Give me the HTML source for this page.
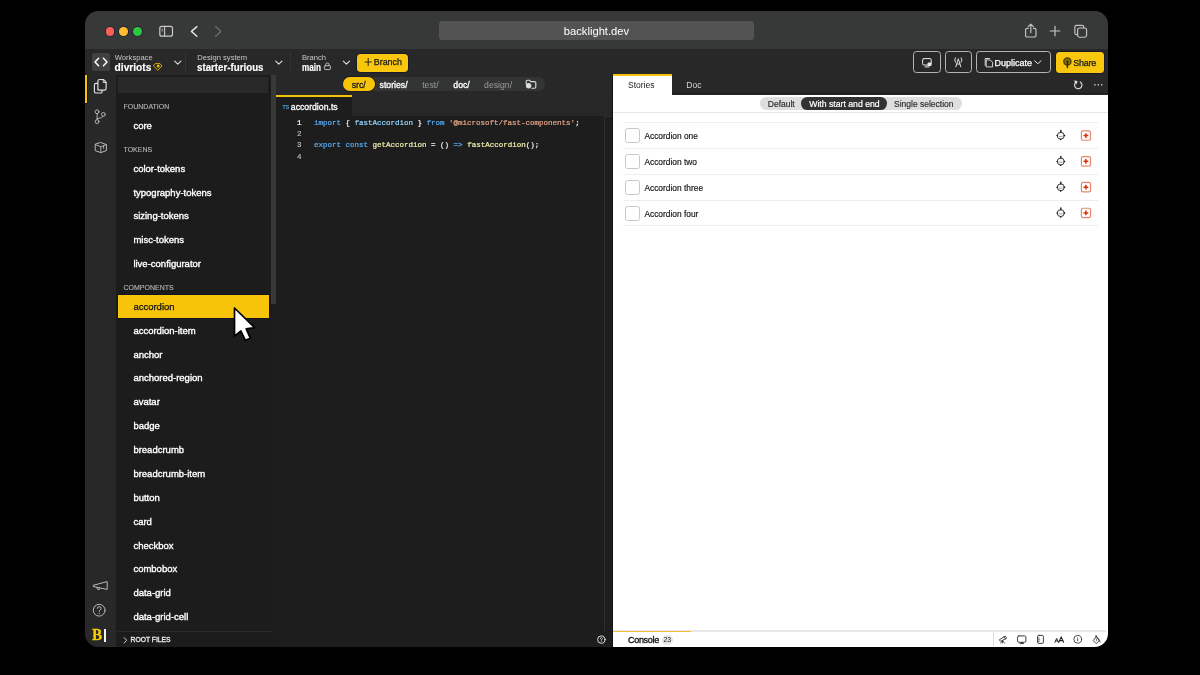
<!DOCTYPE html>
<html><head><meta charset="utf-8">
<style>
*{box-sizing:border-box;margin:0;padding:0}
html,body{width:1200px;height:675px;background:#000;overflow:hidden;font-family:"Liberation Sans",sans-serif;}
#win{position:absolute;left:85px;top:11px;width:1023px;height:636px;border-radius:13.5px;overflow:hidden;background:#1e1e1e;}
#c{position:absolute;left:-85px;top:-11px;width:1200px;height:675px;will-change:transform}
#c>div,#c>svg{position:absolute}
.t{white-space:nowrap;line-height:1}
.item{left:133.4px;font-size:9.5px;color:#fff;line-height:12px;height:12px;white-space:nowrap;-webkit-text-stroke:0.35px #fff}
.hdr{left:123.5px;font-size:7px;color:#b6b6b6;-webkit-text-stroke:0.12px #b6b6b6;line-height:10px;height:10px;white-space:nowrap}
.code{left:314px;font-family:"Liberation Mono",monospace;font-size:7.5px;line-height:11.3px;height:11.3px;white-space:pre;color:#f2f2f2}
.code,.code span{-webkit-text-stroke:0.22px currentColor}
.ln{left:276px;width:25.5px;text-align:right;font-family:"Liberation Mono",monospace;font-size:7.5px;line-height:11.3px;height:11.3px;color:#858585;-webkit-text-stroke:0.2px currentColor}
.k{color:#58aaf0}.v{color:#90d4ff}.s{color:#e0a082}.f{color:#ebebac}
.row{left:623.1px;width:475.2px;height:25.8px;border-top:1px solid #eeeeee}
.row i{position:absolute;left:2.2px;top:5px;width:15px;height:15px;border:1px solid #c8c8c8;border-radius:2.5px;background:#fff}
.row b{position:absolute;left:21.3px;top:8px;font-weight:normal;font-size:8.4px;line-height:11px;color:#111;-webkit-text-stroke:0.15px #111;white-space:nowrap}
.tbtn{top:51px;height:22.2px;border:1.2px solid #b4b4b4;border-radius:3.5px}
.lbl{font-size:7.6px;color:#c8c8c8;line-height:10px;white-space:nowrap}
.val{font-size:10.2px;-webkit-text-stroke:0.15px #fff;color:#fff;line-height:12px;white-space:nowrap;transform-origin:0 50%}
</style></head><body>
<div id="win"><div id="c">
 <!-- backgrounds -->
 <div style="left:85px;top:11px;width:1023px;height:37.8px;background:#373938"></div>
 <div style="left:85px;top:48.8px;width:1023px;height:26.2px;background:#282828"></div>
 <div style="left:276px;top:75px;width:337px;height:21px;background:#282828"></div>
 <div style="left:85px;top:75px;width:31px;height:572px;background:#282828"></div>
 <div style="left:116px;top:75px;width:160px;height:572px;background:#1c1c1c"></div>
 <div style="left:276px;top:95.5px;width:337px;height:20.5px;background:#272727"></div>
 <div style="left:276px;top:116px;width:337px;height:531px;background:#1d1d1d"></div>
 <div style="left:613px;top:74px;width:495px;height:573px;background:#fff"></div>
 <div style="left:613px;top:74px;width:495px;height:20.5px;background:#282828"></div><div style="left:671.7px;top:93.3px;width:437px;height:1.2px;background:#1c1c1c"></div>
 
 <div style="left:612px;top:74px;width:1px;height:573px;background:#121212"></div>
 <!-- TITLE BAR -->
 <div style="left:105.6px;top:27.2px;width:8.6px;height:8.6px;border-radius:50%;background:#fe5f57;box-shadow:0 0 0 0.8px #1c2236"></div>
 <div style="left:119.1px;top:27.2px;width:8.6px;height:8.6px;border-radius:50%;background:#febc2e;box-shadow:0 0 0 0.8px #1c2236"></div>
 <div style="left:133px;top:27.2px;width:8.6px;height:8.6px;border-radius:50%;background:#28c840;box-shadow:0 0 0 0.8px #2c1632"></div>
 <div style="left:439.4px;top:20.8px;width:314.2px;height:19px;border-radius:3.5px;background:#535353"></div>
 <div class="t" style="left:439.4px;top:24.5px;width:314.2px;text-align:center;font-size:11.2px;color:#fff;line-height:12px">backlight.dev</div>
 <svg style="left:0;top:0" width="1200" height="675" viewBox="0 0 1200 675" fill="none" stroke-linecap="round" stroke-linejoin="round">
  <!-- sidebar icon -->
  <rect x="159.8" y="26.4" width="12.7" height="9.8" rx="2" stroke="#c9c9c9" stroke-width="1.2"/>
  <path d="M164.6 26.4V36.2" stroke="#c9c9c9" stroke-width="1.1"/>
  <path d="M162.2 28.8V31.2" stroke="#c9c9c9" stroke-width="0.8"/>
  <!-- back / fwd -->
  <path d="M196.9 26.6L191.4 31.4L196.9 36.2" stroke="#e4e4e4" stroke-width="1.4"/>
  <path d="M215.6 26.6L220.9 31.4L215.6 36.2" stroke="#6e6e6e" stroke-width="1.3"/>
  <!-- share -->
  <path d="M1028.2 28.4H1027.2Q1025.6 28.4 1025.6 30V35.4Q1025.6 37 1027.2 37H1034.4Q1036 37 1036 35.4V30Q1036 28.4 1034.4 28.4H1033.4" stroke="#c4c4c4" stroke-width="1.15"/>
  <path d="M1030.8 32.6V24.4M1028.2 26.6L1030.8 24.1L1033.4 26.6" stroke="#c4c4c4" stroke-width="1.15"/>
  <!-- plus -->
  <path d="M1050.2 31H1059.8M1055 26.4V35.8" stroke="#c4c4c4" stroke-width="1.2"/>
  <!-- tabs -->
  <path d="M1077 34.6H1076.6Q1074.8 34.6 1074.8 32.8V27.2Q1074.8 25.4 1076.6 25.4H1082Q1083.8 25.4 1083.8 27.2V27.6" stroke="#c4c4c4" stroke-width="1.15"/>
  <rect x="1077.6" y="28" width="9" height="9.2" rx="1.9" stroke="#c4c4c4" stroke-width="1.15"/>
 </svg>
 <!-- TOOLBAR -->
 <div style="left:92px;top:53px;width:18px;height:18px;border-radius:2px;background:#3f4040"></div>
 <svg style="left:92px;top:53px" width="18" height="18" viewBox="0 0 18 18" fill="none" stroke="#fff" stroke-width="1.5" stroke-linecap="round" stroke-linejoin="round"><path d="M6.6 5.2L3 9L6.6 12.8M11.4 5.2L15 9L11.4 12.8"/></svg>
 <div class="lbl" style="left:114.8px;top:52.9px">Workspace</div>
 <div class="val" style="left:114.6px;top:61.5px;font-weight:bold">divriots</div>
 <div class="lbl" style="left:197.3px;top:52.9px">Design system</div>
 <div class="val" style="left:197.2px;top:61.5px;font-weight:bold;transform:scaleX(0.955)">starter-furious</div>
 <div class="lbl" style="left:302px;top:52.9px">Branch</div>
 <div class="val" style="left:301.8px;top:61.5px;font-weight:bold;transform:scaleX(0.8)">main</div>
 <div style="left:185.3px;top:52px;width:1px;height:19.5px;background:#343434"></div>
 <div style="left:290.3px;top:52px;width:1px;height:19.5px;background:#343434"></div>
 <svg style="left:0;top:0" width="1200" height="675" viewBox="0 0 1200 675" fill="none" stroke-linecap="round" stroke-linejoin="round">
  <path d="M174.7 61.2L177.8 64.1L180.9 61.2" stroke="#dedede" stroke-width="1.15"/>
  <path d="M275.7 61.2L278.8 64.1L281.9 61.2" stroke="#dedede" stroke-width="1.15"/>
  <path d="M343.3 61.2L346.4 64.1L349.5 61.2" stroke="#dedede" stroke-width="1.15"/>
  <!-- diamond -->
  <path d="M155.6 63.6H160L162 66L157.8 70.2L153.6 66Z" stroke="#e9b800" stroke-width="0.9"/>
  <circle cx="158.2" cy="66" r="1.5" fill="#e9b800"/>
  <!-- lock -->
  <rect x="324.4" y="65.7" width="6" height="3.9" rx="0.9" stroke="#d0d0d0" stroke-width="0.9"/>
  <path d="M325.7 65.6V64.6Q325.7 63 327.4 63Q329.1 63 329.1 64.6V65.6" stroke="#d0d0d0" stroke-width="0.9"/>
 </svg>
 <div style="left:357.4px;top:54px;width:51px;height:17.5px;border-radius:3.8px;background:#f8c70e;box-shadow:0 0 0 0.7px #14162b"></div>
 <div class="t" style="left:373.8px;top:58.3px;font-size:8.9px;color:#1a1a1a;-webkit-text-stroke:0.25px #1a1a1a">Branch</div>
 <svg style="left:362px;top:56px" width="12" height="12" viewBox="0 0 12 12" fill="none" stroke="#1a1a1a" stroke-width="0.9"><path d="M2.6 6H9.8M6.2 2V10"/></svg>
 <!-- right toolbar buttons -->
 <div class="tbtn" style="left:913.3px;width:27.5px"></div>
 <div class="tbtn" style="left:944.7px;width:27.3px"></div>
 <div class="tbtn" style="left:976.2px;width:74.6px"></div>
 <div style="left:1055.8px;top:52.3px;width:48.4px;height:20.4px;border-radius:3.5px;background:#f8c70e;box-shadow:0 0 0 0.7px #14162b"></div>
 <div class="t" style="left:994.5px;top:59px;font-size:9px;color:#fff;-webkit-text-stroke:0.25px #fff">Duplicate</div>
 <div class="t" style="left:1073.3px;top:59px;font-size:9px;letter-spacing:-0.25px;color:#1a1a1a;-webkit-text-stroke:0.25px #1a1a1a">Share</div>
 <svg style="left:0;top:0" width="1200" height="675" viewBox="0 0 1200 675" fill="none" stroke-linecap="round" stroke-linejoin="round">
  <!-- monitor btn icon -->
  <rect x="922.6" y="58.6" width="8.6" height="6.4" rx="1.2" stroke="#e8e8e8" stroke-width="1"/>
  <path d="M925 66.9H929.2" stroke="#e8e8e8" stroke-width="1"/>
  <rect x="927.6" y="62.6" width="3.8" height="3.4" rx="0.6" fill="#e8e8e8"/>
  <!-- antenna btn icon -->
  <path d="M955.8 66.8L958.3 58.8L960.8 66.8M956.7 64H959.9" stroke="#e8e8e8" stroke-width="0.95"/>
  <path d="M955.4 57.8Q953.8 60 955.4 62.2M961.2 57.8Q962.8 60 961.2 62.2" stroke="#e8e8e8" stroke-width="0.95"/>
  <!-- duplicate icon -->
  <path d="M986.6 59.9H990.2L992.6 62.3V66.9H986.6Z" stroke="#e8e8e8" stroke-width="0.9"/>
  <path d="M985.2 65.3V58.5H989.4" stroke="#e8e8e8" stroke-width="0.9"/>
  <path d="M1034.6 60.8L1037.8 63.8L1041 60.8" stroke="#e8e8e8" stroke-width="1"/>
  <!-- share podcast icon -->
  <circle cx="1067.4" cy="61.4" r="3.5" fill="#9a7d00" stroke="#4f4000" stroke-width="1.5"/>
  <circle cx="1067.4" cy="61.4" r="1.2" fill="#3a2e00"/>
  <path d="M1067.4 62.4V67.4" stroke="#3a2e00" stroke-width="1.5"/>
 </svg>

 <!-- SIDEBAR -->
 <div style="left:85px;top:75px;width:3px;height:28.6px;background:#12143a"></div><div style="left:85px;top:75px;width:2px;height:27.7px;background:#f2c40a"></div>
 <div style="left:118.2px;top:77.3px;width:150px;height:15.5px;background:#292929"></div>
 <div style="left:271px;top:75px;width:5px;height:229px;background:#383838"></div>
 <div style="left:117.8px;top:294.7px;width:150.8px;height:23.7px;background:#f8c40a;box-shadow:0 0 0 0.6px #0d0f25"></div>
 <div class="hdr" style="top:101.8px">FOUNDATION</div>
 <div class="hdr" style="top:144.5px">TOKENS</div>
 <div class="hdr" style="top:282.6px">COMPONENTS</div>
 <div class="item" style="top:120.2px">core</div>
 <div class="item" style="top:162.7px">color-tokens</div>
 <div class="item" style="top:186.5px">typography-tokens</div>
 <div class="item" style="top:210.4px">sizing-tokens</div>
 <div class="item" style="top:234.2px">misc-tokens</div>
 <div class="item" style="top:258.2px">live-configurator</div>
 <div class="item" style="top:301.4px;color:#111;-webkit-text-stroke:0.25px #111">accordion</div>
 <div class="item" style="top:324.6px">accordion-item</div>
 <div class="item" style="top:348.5px">anchor</div>
 <div class="item" style="top:372.4px">anchored-region</div>
 <div class="item" style="top:396.2px">avatar</div>
 <div class="item" style="top:420.2px">badge</div>
 <div class="item" style="top:444.0px">breadcrumb</div>
 <div class="item" style="top:467.9px">breadcrumb-item</div>
 <div class="item" style="top:491.7px">button</div>
 <div class="item" style="top:515.6px">card</div>
 <div class="item" style="top:539.5px">checkbox</div>
 <div class="item" style="top:563.4px">combobox</div>
 <div class="item" style="top:587.2px">data-grid</div>
 <div class="item" style="top:611.2px">data-grid-cell</div>
 <div style="left:118px;top:631px;width:154px;height:1px;background:#2c2c2c"></div>
 <div class="t" style="left:130.6px;top:637.2px;font-size:6.75px;color:#ededed;-webkit-text-stroke:0.3px #ededed">ROOT FILES</div>
 <!-- EDITOR -->
 <div style="left:276px;top:95.5px;width:75.6px;height:21.2px;background:#1d1d1d"></div>
 <div style="left:276px;top:95.3px;width:75.6px;height:1.8px;background:#f5c20b"></div>
 <div class="t" style="left:282.6px;top:104.5px;font-size:5.2px;font-weight:bold;color:#4aa0dc;letter-spacing:-0.1px">TS</div>
 <div class="t" style="left:290.8px;top:102.9px;font-size:8.7px;color:#fff;-webkit-text-stroke:0.3px #fff">accordion.ts</div>
 <div style="left:604px;top:116.3px;width:1px;height:514.5px;background:#2f2f2f"></div><div style="left:604px;top:116.3px;width:8px;height:1px;background:#2c2c2c"></div>
 <div class="ln" style="top:117.75px;color:#ffffff">1</div>
 <div class="code" style="top:117.75px"><span class="k">import</span> { <span class="v">fastAccordion</span> } <span class="k">from</span> <span class="s">'@microsoft/fast-components'</span>;</div>
 <div class="ln" style="top:129.00px;color:#b8b8b8">2</div>
 <div class="ln" style="top:140.25px;color:#b8b8b8">3</div>
 <div class="code" style="top:140.25px"><span class="k">export</span> <span class="k">const</span> <span class="f">getAccordion</span> = () <span class="k">=&gt;</span> <span class="f">fastAccordion</span>();</div>
 <div class="ln" style="top:151.50px;color:#b8b8b8">4</div>
 <!-- PREVIEW -->
 <div style="left:613px;top:74px;width:58.7px;height:21px;background:#fff"></div>
 <div style="left:613px;top:73.8px;width:58.7px;height:1.9px;background:#f5c20b"></div>
 <div class="t" style="left:628px;top:81.3px;font-size:8.5px;color:#1a1a1a">Stories</div>
 <div class="t" style="left:686.3px;top:81.3px;font-size:8.5px;color:#d6d6d6">Doc</div>
 <div style="left:759.5px;top:97.1px;width:202.3px;height:12.7px;border-radius:6.4px;background:#dedede"></div>
 <div style="left:801px;top:97.1px;width:86.2px;height:12.7px;border-radius:6.4px;background:#333"></div>
 <div class="t" style="left:767.8px;top:100px;font-size:8.5px;color:#2a2a2a;-webkit-text-stroke:0.15px #2a2a2a">Default</div>
 <div class="t" style="left:809.2px;top:100px;font-size:8.7px;color:#fff;-webkit-text-stroke:0.2px #fff">With start and end</div>
 <div class="t" style="left:894px;top:100px;font-size:8.5px;color:#2a2a2a;-webkit-text-stroke:0.15px #2a2a2a">Single selection</div>
 <div style="left:613px;top:111.6px;width:495px;height:1px;background:#e8e8e8"></div>
 <div class="row" style="top:122.1px"><i></i><b>Accordion one</b></div>
 <div class="row" style="top:147.9px"><i></i><b>Accordion two</b></div>
 <div class="row" style="top:173.7px"><i></i><b>Accordion three</b></div>
 <div class="row" style="top:199.5px"><i></i><b>Accordion four</b></div>
 <div class="row" style="top:225.3px;height:1px"></div>
 <div style="left:613px;top:630.4px;width:493px;height:1.4px;background:#e7e7e7"></div>
 <div style="left:613px;top:630.6px;width:77.5px;height:1.5px;background:#eec23a"></div>
 <div class="t" style="left:628px;top:636px;font-size:9px;color:#111;-webkit-text-stroke:0.35px #111;letter-spacing:-0.3px">Console</div>
 <div style="left:661.5px;top:634.5px;width:11.7px;height:10px;border-radius:5px;background:#e6e6e6"></div>
 <div class="t" style="left:661.5px;top:636.5px;width:11.7px;text-align:center;font-size:6.8px;color:#222">23</div>
 <div style="left:993px;top:631.5px;width:1px;height:14px;background:#e0e0e0"></div>
 <!-- FOLDER PILLS -->
 <div style="left:342.4px;top:77.2px;width:202.4px;height:14px;border-radius:7px;background:#333534"></div>
 <div style="left:343px;top:77.4px;width:31.5px;height:13.6px;border-radius:6.8px;background:#f8c40a;box-shadow:0 0 0 0.6px #0d0f25"></div>
 <div class="t" style="left:351.7px;top:80.9px;font-size:8.7px;color:#1a1a1a;-webkit-text-stroke:0.3px #1a1a1a;">src/</div>
 <div class="t" style="left:379.6px;top:80.9px;font-size:8.7px;color:#fff;-webkit-text-stroke:0.3px #fff;">stories/</div>
 <div class="t" style="left:422.2px;top:80.9px;font-size:8.7px;color:#9a9a9a;">test/</div>
 <div class="t" style="left:453.3px;top:80.9px;font-size:8.7px;color:#fff;-webkit-text-stroke:0.3px #fff;">doc/</div>
 <div class="t" style="left:484.1px;top:80.9px;font-size:8.7px;color:#9a9a9a;">design/</div>
 <svg style="left:0;top:0" width="1200" height="675" viewBox="0 0 1200 675" fill="none" stroke-linecap="round" stroke-linejoin="round">
<path d="M526.2 84V81.4Q526.2 80.2 527.4 80.2H529.4L530.8 81.6H534.6Q535.8 81.6 535.8 82.8V87Q535.8 88.2 534.6 88.2H531.8" stroke="#dadada" stroke-width="1.15"/>
<circle cx="528.6" cy="85.8" r="2.7" fill="#dedede"/>
<path d="M97.9 90.1V81.2Q97.9 79.5 99.6 79.5H103.4L106.1 82.2V88.4Q106.1 90.1 104.4 90.1H99.6Q97.9 90.1 97.9 88.4" stroke="#e2e2e2" stroke-width="1.15"/>
<path d="M103.2 79.7V82.5H106" stroke="#e2e2e2" stroke-width="0.9"/>
<path d="M97.6 83.4H96Q94.4 83.4 94.4 85V91.4Q94.4 93 96 93H100.5Q102.1 93 102.1 91.4V90.4" stroke="#e2e2e2" stroke-width="1.15"/>
<circle cx="97.1" cy="111.8" r="1.9" stroke="#b9b9b9" stroke-width="0.95"/><circle cx="97.1" cy="121.6" r="1.9" stroke="#b9b9b9" stroke-width="0.95"/><circle cx="103.4" cy="114.4" r="1.9" stroke="#b9b9b9" stroke-width="0.95"/>
<path d="M97.1 113.8V119.6M103.2 116.4Q102.6 118.2 97.3 118.6" stroke="#b9b9b9" stroke-width="0.95"/>
<path d="M100.8 142.6L106.4 144.6V150.6L100.8 152.6L95.2 150.6V144.6Z" stroke="#b9b9b9" stroke-width="1"/>
<path d="M95.4 144.7L100.8 146.7L106.2 144.7M100.8 146.7V152.4M103.6 145.8V148.4" stroke="#b9b9b9" stroke-width="0.9"/>
<path d="M93.6 585.2L107.2 581.6V589.4L93.6 586.6Z" stroke="#b9b9b9" stroke-width="1"/>
<path d="M96.8 587.4L97.6 589.4H99.6L99.2 588" stroke="#b9b9b9" stroke-width="0.9"/>
<circle cx="99.2" cy="610.2" r="5.9" stroke="#b9b9b9" stroke-width="1"/>
<path d="M97.3 608.4Q97.4 606.7 99.2 606.7Q101.1 606.7 101.1 608.3Q101.1 609.3 100 609.9Q99.2 610.4 99.2 611.4" stroke="#b9b9b9" stroke-width="1"/><circle cx="99.2" cy="613.3" r="0.65" fill="#b9b9b9"/>
<circle cx="601.3" cy="639.6" r="3.7" stroke="#f0f0f0" stroke-width="0.9"/>
<path d="M600.3 638.7Q600.3 637.7 601.3 637.7Q602.4 637.7 602.4 638.6Q602.4 639.2 601.3 639.8V640.3" stroke="#f0f0f0" stroke-width="0.7"/><circle cx="601.3" cy="641.5" r="0.45" fill="#f0f0f0"/>
<path d="M1080.2 81.9A3.7 3.7 0 1 1 1076.2 82" stroke="#dcdcdc" stroke-width="1.15"/>
<path d="M1074.6 80.8L1077.2 81.2L1076.6 83.8Z" fill="#f2f2f2" stroke="#f2f2f2" stroke-width="0.4"/>
<rect x="1094.25" y="84.1" width="1.3" height="1.4" fill="#dcdcdc"/>
<rect x="1097.6499999999999" y="84.1" width="1.3" height="1.4" fill="#dcdcdc"/>
<rect x="1101.05" y="84.1" width="1.3" height="1.4" fill="#dcdcdc"/>
<circle cx="1060.8" cy="135.7" r="3.5" stroke="#2a2a2a" stroke-width="0.9" fill="#f4f4f4"/>
<path d="M1060.8 130.6V132.3" stroke="#2a2a2a" stroke-width="1.5"/>
<circle cx="1057.1" cy="135.6" r="0.75" fill="#111"/><circle cx="1064.5" cy="135.6" r="0.75" fill="#111"/><circle cx="1060.6" cy="139.5" r="0.75" fill="#111"/>
<path d="M1059.3 136.5H1062.3" stroke="#999" stroke-width="0.8"/>
<circle cx="1060.8" cy="161.5" r="3.5" stroke="#2a2a2a" stroke-width="0.9" fill="#f4f4f4"/>
<path d="M1060.8 156.4V158.1" stroke="#2a2a2a" stroke-width="1.5"/>
<circle cx="1057.1" cy="161.4" r="0.75" fill="#111"/><circle cx="1064.5" cy="161.4" r="0.75" fill="#111"/><circle cx="1060.6" cy="165.3" r="0.75" fill="#111"/>
<path d="M1059.3 162.3H1062.3" stroke="#999" stroke-width="0.8"/>
<circle cx="1060.8" cy="187.3" r="3.5" stroke="#2a2a2a" stroke-width="0.9" fill="#f4f4f4"/>
<path d="M1060.8 182.2V183.9" stroke="#2a2a2a" stroke-width="1.5"/>
<circle cx="1057.1" cy="187.2" r="0.75" fill="#111"/><circle cx="1064.5" cy="187.2" r="0.75" fill="#111"/><circle cx="1060.6" cy="191.1" r="0.75" fill="#111"/>
<path d="M1059.3 188.1H1062.3" stroke="#999" stroke-width="0.8"/>
<circle cx="1060.8" cy="213.1" r="3.5" stroke="#2a2a2a" stroke-width="0.9" fill="#f4f4f4"/>
<path d="M1060.8 208.0V209.7" stroke="#2a2a2a" stroke-width="1.5"/>
<circle cx="1057.1" cy="213.0" r="0.75" fill="#111"/><circle cx="1064.5" cy="213.0" r="0.75" fill="#111"/><circle cx="1060.6" cy="216.9" r="0.75" fill="#111"/>
<path d="M1059.3 213.9H1062.3" stroke="#999" stroke-width="0.8"/>
<path d="M999.6 639.6L1005.2 636.1L1006.7 638.2L1001 641.2Z" stroke="#333" stroke-width="0.9"/>
<path d="M1003.9 636.9L1005.3 639" stroke="#333" stroke-width="0.8"/>
<path d="M1002.6 640.6L1000.8 643.2M1002.6 640.6L1004.6 643.2M1002.6 640.6V643" stroke="#333" stroke-width="0.8"/>
<rect x="1017.6" y="635.9" width="8.3" height="6.4" rx="1.3" stroke="#333" stroke-width="0.95"/>
<path d="M1020 643.6H1023.6" stroke="#333" stroke-width="0.9"/><circle cx="1021.8" cy="642.7" r="0.8" fill="#111"/>
<rect x="1037.6" y="635.4" width="5.8" height="8" rx="1.1" stroke="#333" stroke-width="0.95"/>
<path d="M1038 638H1039.2M1038 639.8H1039.8M1038 641.4H1039.2" stroke="#333" stroke-width="0.7"/>
<circle cx="1077.7" cy="639.3" r="3.9" stroke="#333" stroke-width="0.9"/>
<path d="M1077.7 638.8V640.8" stroke="#333" stroke-width="0.9"/><circle cx="1077.7" cy="637.5" r="0.45" fill="#333"/>
<path d="M1096.2 636.6L1093.2 640.6L1096.2 643.6L1099.4 640.6Z" stroke="#333" stroke-width="0.9"/>
<path d="M1096.2 636.4L1100.2 642" stroke="#333" stroke-width="0.9"/><circle cx="1096" cy="635.7" r="0.7" fill="#333"/><path d="M1096.4 639V640.6" stroke="#333" stroke-width="0.7"/>
<path d="M124.2 637.6L126.6 640.3L124.2 643" stroke="#dcdcdc" stroke-width="0.9"/>
</svg>
 <div class="t" style="left:92.4px;top:626.4px;font-family:'Liberation Serif',serif;font-weight:bold;font-size:17.5px;color:#f8cc00;-webkit-text-stroke:0.3px #f8cc00;transform:scaleX(0.87);transform-origin:0 0;text-shadow:0 0 1px #14163a">B</div>
 <div style="left:104.1px;top:628.6px;width:1.7px;height:13px;background:#f4f4f4"></div>
 <svg style="left:0;top:0" width="1200" height="675" viewBox="0 0 1200 675"><path d="M234.5 308V336.2L240.9 331L245.4 340.4L250.3 338.2L246.2 328.8L254.6 327.6Z" fill="#fff" stroke="#000" stroke-width="1.7" stroke-linejoin="round"/></svg>
 <svg style="left:0;top:0" width="1200" height="675" viewBox="0 0 1200 675" fill="none" stroke="#222" stroke-linecap="round" stroke-linejoin="round"><path d="M1054.9 642.3L1056.7 638.4L1058.5 642.3M1055.6 641H1057.8" stroke-width="0.95"/><path d="M1058.8 642.3L1061.2 636.9L1063.6 642.3M1059.8 640.6H1062.6" stroke-width="1.1"/></svg>
 <svg style="left:0;top:0" width="1200" height="675" viewBox="0 0 1200 675" fill="none">
<rect x="1081.4" y="130.85" width="9.1" height="9.4" rx="1.6" stroke="#e8866c" stroke-width="1.2"/>
<path d="M1083.5 135.55H1088.3M1085.9 133.15V137.95" stroke="#d9300c" stroke-width="1.5"/>
<rect x="1081.4" y="156.65" width="9.1" height="9.4" rx="1.6" stroke="#e8866c" stroke-width="1.2"/>
<path d="M1083.5 161.35H1088.3M1085.9 158.95V163.75" stroke="#d9300c" stroke-width="1.5"/>
<rect x="1081.4" y="182.45" width="9.1" height="9.4" rx="1.6" stroke="#e8866c" stroke-width="1.2"/>
<path d="M1083.5 187.15H1088.3M1085.9 184.75V189.55" stroke="#d9300c" stroke-width="1.5"/>
<rect x="1081.4" y="208.25" width="9.1" height="9.4" rx="1.6" stroke="#e8866c" stroke-width="1.2"/>
<path d="M1083.5 212.95H1088.3M1085.9 210.55V215.35" stroke="#d9300c" stroke-width="1.5"/>
</svg>

</div></div>
</body></html>
